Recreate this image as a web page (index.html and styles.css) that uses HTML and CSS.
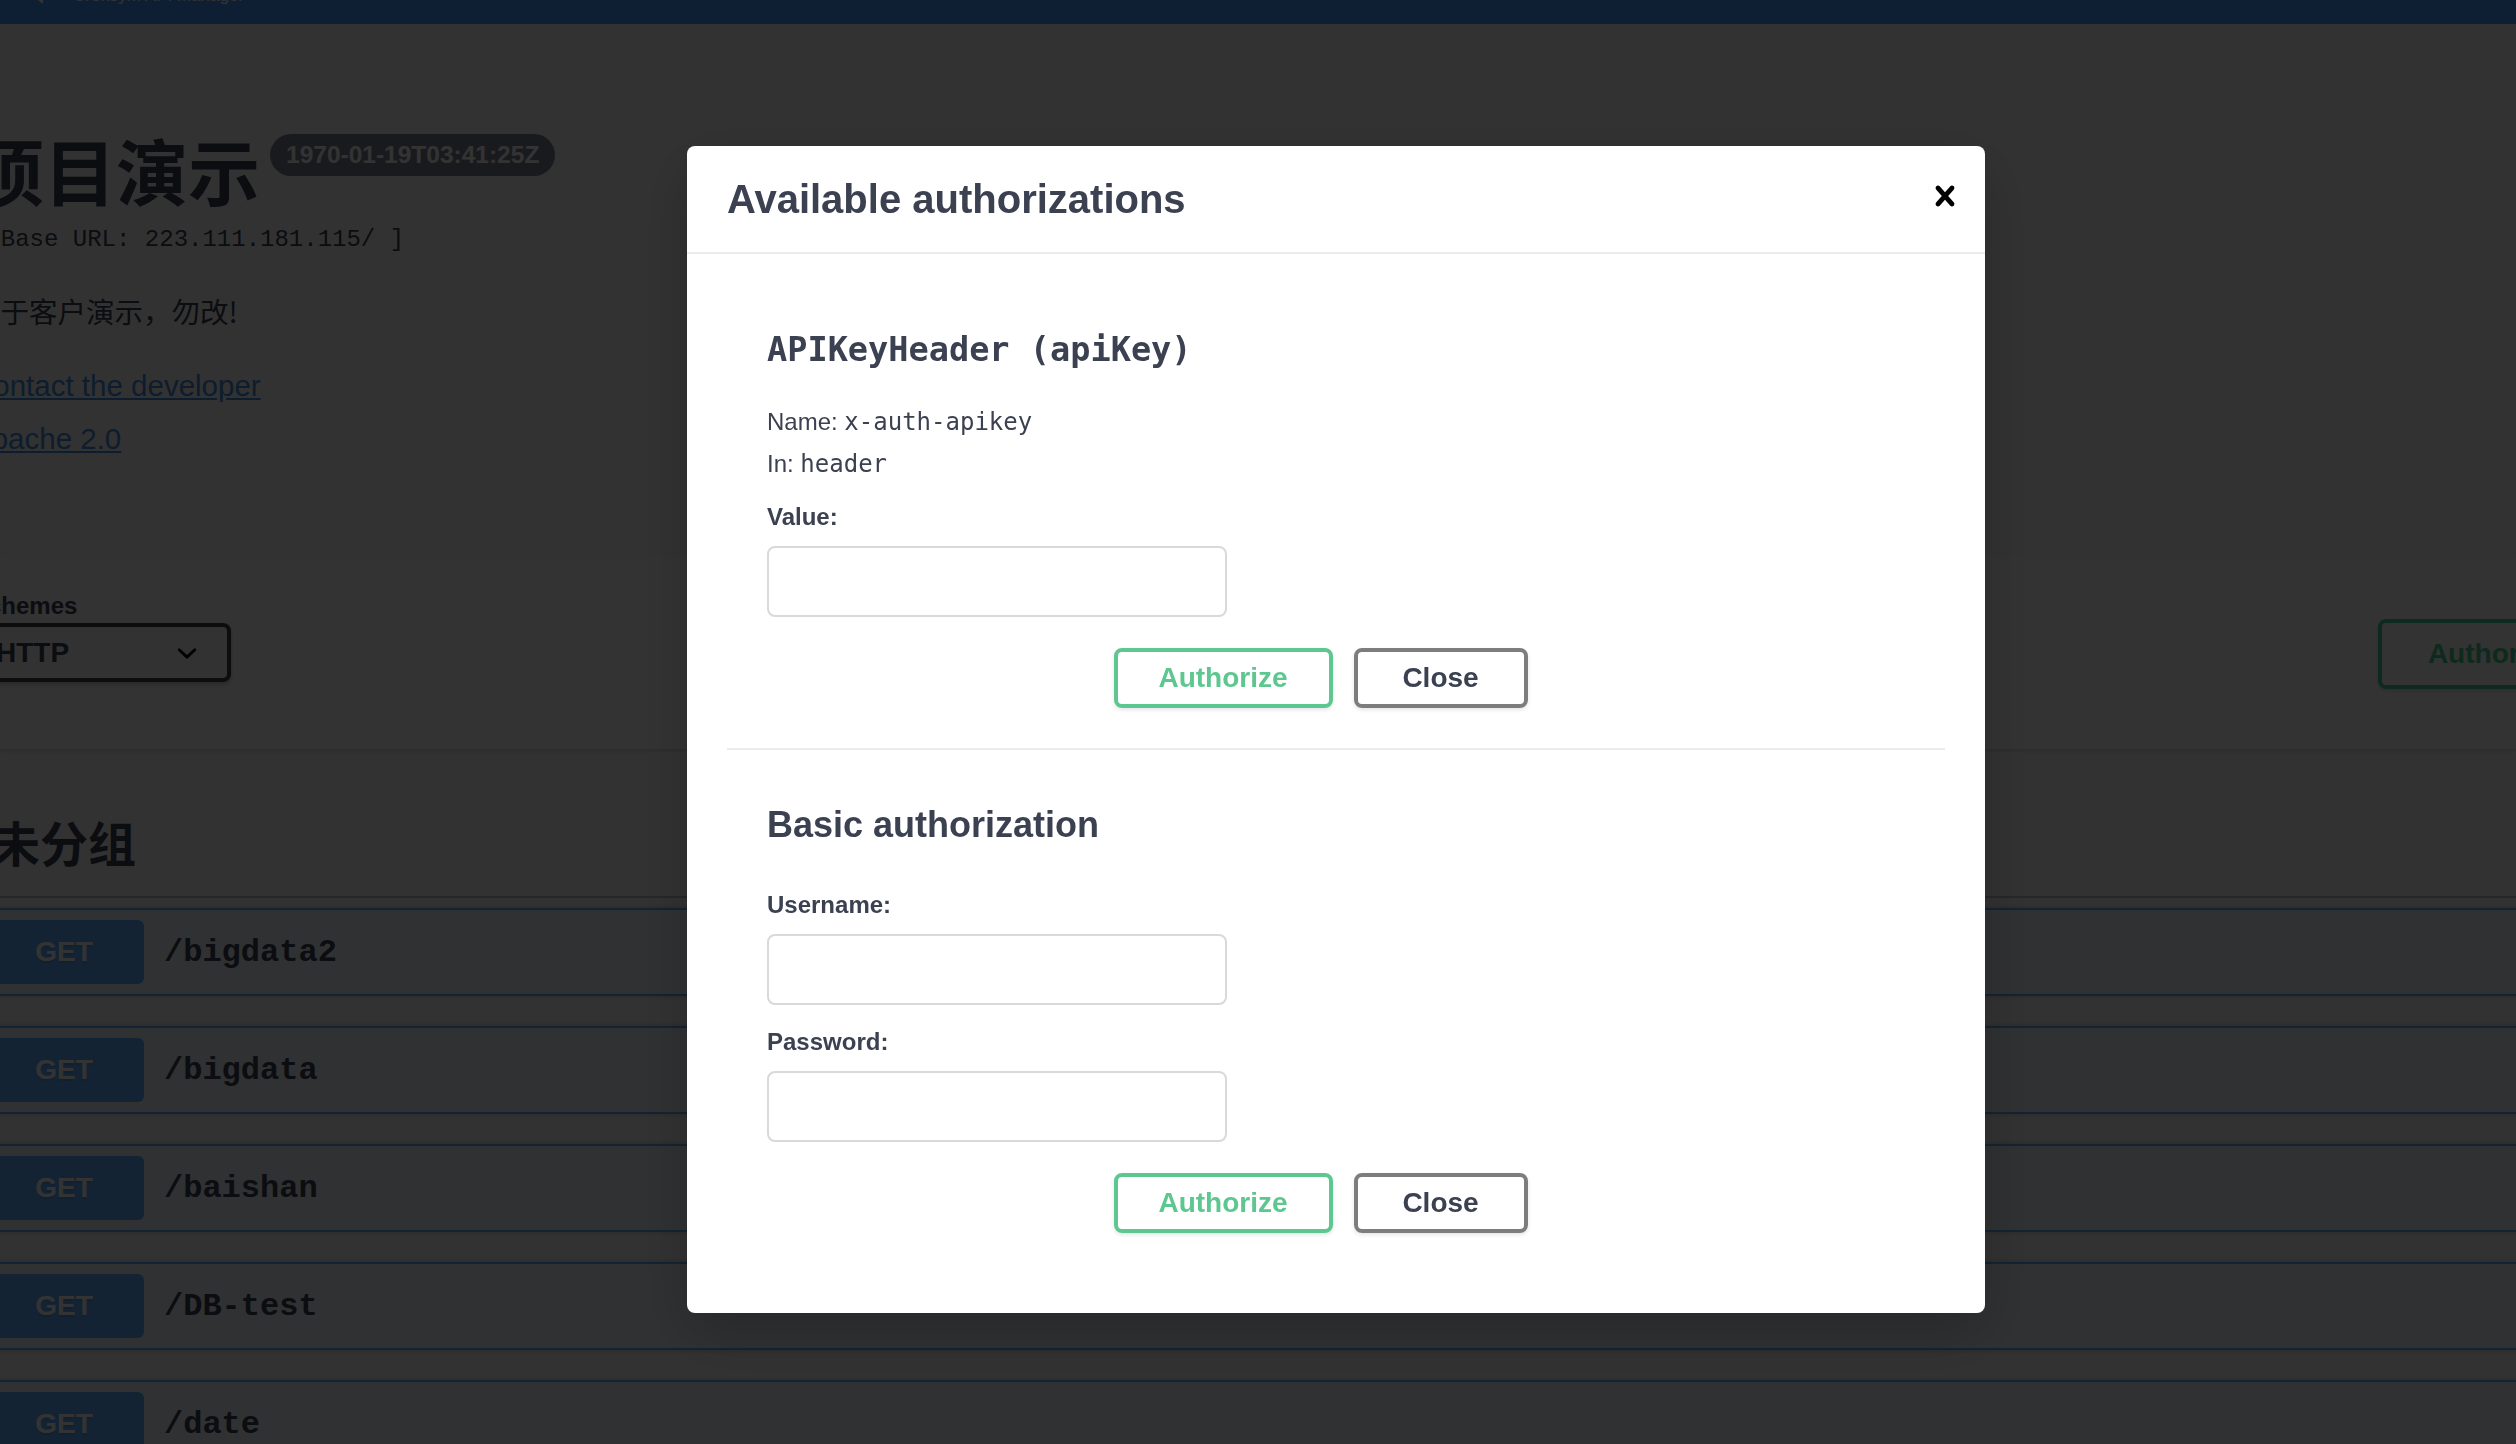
FILE: index.html
```html
<!DOCTYPE html>
<html lang="zh-CN">
<head>
<meta charset="utf-8">
<title>项目演示 - Swagger UI</title>
<link rel="stylesheet" href="styles.css">
</head>
<body>
<div class="page">
  <header class="topbar">
    <div class="topbar-inner">
      <svg class="topbar-arrow" width="10" height="16" viewBox="0 0 10 16"><polygon points="10,0 10,16 0,8" fill="#ffffff"/></svg>
      <span class="topbar-title">Cronsym API Manager</span>
    </div>
  </header>

  <div class="wrapper">
    <section class="info">
      <div class="title-row">
        <h2 class="title">项目演示</h2>
        <span class="version"><pre class="version-text">1970-01-19T03:41:25Z</pre></span>
      </div>
      <pre class="base-url">[ Base URL: 223.111.181.115/ ]</pre>
      <p class="desc">用于客户演示，勿改!</p>
      <div class="contact"><a class="link" href="#">Contact the developer</a></div>
      <div class="license"><a class="link" href="#">Apache 2.0</a></div>
    </section>
  </div>

  <section class="scheme-container">
    <div class="wrapper scheme-row">
      <div class="schemes">
        <span class="schemes-title">Schemes</span>
        <div class="select">
          <span class="select-value">HTTP</span>
          <svg class="select-arrow" width="40" height="40" viewBox="0 0 20 20"><path fill="#000" d="M13.418 7.859a.695.695 0 01.978 0 .68.68 0 010 .969l-3.908 3.830a.697.697 0 01-.979 0l-3.908-3.830a.68.68 0 010-.969.695.695 0 01.978 0L10 11l3.418-3.141z"/></svg>
        </div>
      </div>
      <button class="btn btn-authorize-top"><span class="btn-text">Authorize</span><svg width="40" height="40" viewBox="0 0 20 20"><path fill="#49cc90" d="M15.8 8H14V5.6C14 2.703 12.665 1 10 1 7.334 1 6 2.703 6 5.6V6h2v-.801C8 3.754 8.797 3 10 3c1.203 0 2 .754 2 2.199V8H4c-.553 0-1 .646-1 1.199V17c0 .549.428 1.139.951 1.307l1.197.387C5.672 18.861 6.55 19 7.1 19h5.8c.549 0 1.428-.139 1.951-.307l1.196-.387c.524-.167.953-.757.953-1.306V9.199C17 8.646 16.352 8 15.8 8z"/></svg></button>
    </div>
  </section>

  <div class="wrapper ops">
    <h3 class="opblock-tag">未分组</h3>
    <div class="opblock"><div class="summary"><span class="method">GET</span><span class="path">/bigdata2</span></div></div>
    <div class="opblock"><div class="summary"><span class="method">GET</span><span class="path">/bigdata</span></div></div>
    <div class="opblock"><div class="summary"><span class="method">GET</span><span class="path">/baishan</span></div></div>
    <div class="opblock"><div class="summary"><span class="method">GET</span><span class="path">/DB-test</span></div></div>
    <div class="opblock"><div class="summary"><span class="method">GET</span><span class="path">/date</span></div></div>
  </div>
</div>

<div class="backdrop"></div>

<div class="modal" role="dialog">
  <div class="modal-header">
    <h3 class="modal-title">Available authorizations</h3>
    <button class="close-modal" aria-label="Close">
      <svg width="40" height="40" viewBox="0 0 20 20"><path fill="#000" d="M14.348 14.849c-.469.469-1.229.469-1.697 0L10 11.819l-2.651 3.029c-.469.469-1.229.469-1.697 0-.469-.469-.469-1.229 0-1.697l2.758-3.15-2.759-3.152c-.469-.469-.469-1.228 0-1.697.469-.469 1.228-.469 1.697 0L10 8.183l2.651-3.031c.469-.469 1.228-.469 1.697 0 .469.469.469 1.229 0 1.697l-2.758 3.152 2.758 3.15c.469.469.469 1.229 0 1.698z"/></svg>
    </button>
  </div>
  <div class="modal-content">
    <div class="auth-container">
      <h4 class="auth-title mono">APIKeyHeader (apiKey)</h4>
      <div class="auth-row">Name: <code class="code">x-auth-apikey</code></div>
      <div class="auth-row auth-row-in">In: <code class="code">header</code></div>
      <label class="field-label label-value">Value:</label>
      <input class="field" type="text">
      <div class="btn-wrapper">
        <button class="btn btn-modal btn-authorize">Authorize</button>
        <button class="btn btn-modal btn-close">Close</button>
      </div>
    </div>
    <div class="auth-container last">
      <h4 class="auth-title sans">Basic authorization</h4>
      <label class="field-label label-user">Username:</label>
      <input class="field" type="text">
      <label class="field-label label-pass">Password:</label>
      <input class="field" type="password">
      <div class="btn-wrapper">
        <button class="btn btn-modal btn-authorize">Authorize</button>
        <button class="btn btn-modal btn-close">Close</button>
      </div>
    </div>
  </div>
</div>
</body>
</html>
```

FILE: styles.css
```css
html, body {
  margin: 0;
  padding: 0;
  overflow: hidden;
  width: 100%;
  height: 100%;
}

body {
  background: #fafafa;
  color: #3b4151;
  font-family: "Liberation Sans", "Noto Sans CJK SC", sans-serif;
}

.page {
  width: 100%;
}

/* ---------- top bar ---------- */
.topbar {
  height: 24px;
  background: rgb(75, 155, 255);
  overflow: hidden;
}

.topbar-inner {
  display: flex;
  align-items: center;
  margin-top: -14px;
  padding-left: 33px;
  height: 20px;
}

.topbar-arrow {
  flex: none;
}

.topbar-title {
  margin-left: 30px;
  font-size: 17px;
  line-height: 20px;
  color: #ffffff;
}

/* ---------- wrapper ---------- */
.wrapper {
  width: 2715px;
  margin-left: -28px;
}

/* ---------- info ---------- */
.info {
  padding-top: 109px;
}

.title-row {
  display: flex;
  align-items: flex-start;
}

.title {
  margin: 0;
  font-family: "Noto Sans CJK SC", sans-serif;
  font-size: 72px;
  line-height: 72px;
  font-weight: 700;
  color: #3b4151;
}

.version {
  display: inline-block;
  margin: 1px 0 0 10px;
  padding: 7px 16px 7px 16px;
  background: #7d8492;
  border-radius: 57px;
}

.version-text {
  margin: 0;
  font-family: "Liberation Sans", sans-serif;
  font-size: 24.5px;
  line-height: 28px;
  font-weight: 700;
  color: #ffffff;
}

.base-url {
  margin: 19px 0 0;
  font-family: "Liberation Mono", monospace;
  font-size: 24px;
  line-height: 32px;
  color: #3b4151;
}

.desc {
  margin: 35px 0 0;
  font-family: "Noto Sans CJK SC", sans-serif;
  font-size: 28.5px;
  line-height: 40px;
}

.contact {
  margin-top: 35px;
  font-size: 29.5px;
  line-height: 40px;
}

.license {
  margin-top: 13px;
  font-size: 29.5px;
  line-height: 40px;
}

.link {
  color: #4990e2;
  text-decoration: underline;
}

/* ---------- scheme container ---------- */
.scheme-container {
  margin-top: 99px;
  height: 191px;
  box-sizing: border-box;
  padding-top: 34px;
  background: #ffffff;
  box-shadow: 0 2px 4px 0 rgba(0, 0, 0, 0.15);
}

.scheme-row {
  display: flex;
  align-items: flex-start;
  justify-content: space-between;
}

.schemes {
  display: flex;
  flex-direction: column;
}

.schemes-title {
  font-size: 24px;
  line-height: 28px;
  font-weight: 700;
  color: #3b4151;
}

.select {
  margin-top: 3px;
  width: 259px;
  height: 59px;
  box-sizing: border-box;
  border: 4px solid #41444e;
  border-radius: 8px;
  box-shadow: 0 2px 4px 0 rgba(0, 0, 0, 0.25);
  background: #f7f7f7;
  display: flex;
  align-items: center;
  padding-left: 20px;
}

.select-value {
  font-size: 28px;
  font-weight: 700;
  color: #3b4151;
}

.select-arrow {
  margin-left: auto;
  margin-right: 20px;
}

/* ---------- buttons ---------- */
.btn {
  box-sizing: border-box;
  border: 4px solid #808080;
  border-radius: 8px;
  background: transparent;
  font-family: "Liberation Sans", sans-serif;
  font-size: 28px;
  font-weight: 700;
  line-height: 1;
  box-shadow: 0 2px 4px rgba(0, 0, 0, 0.1);
  display: flex;
  align-items: center;
  justify-content: center;
  padding: 0;
  cursor: pointer;
}

.btn-authorize-top {
  margin-top: 27px;
  height: 70px;
  padding: 0 46px;
  border-color: #49cc90;
  color: #49cc90;
  background: transparent;
}

.btn-text {
  padding-right: 40px;
}

/* ---------- operations ---------- */
.ops {
  margin-top: 38px;
}

.opblock-tag {
  margin: 0 0 10px;
  padding: 20px 40px 20px 20px;
  font-family: "Noto Sans CJK SC", sans-serif;
  font-size: 48px;
  line-height: 69px;
  font-weight: 700;
  color: #3b4151;
  border-bottom: 2px solid rgba(59, 65, 81, 0.3);
}

.opblock {
  margin-bottom: 30px;
  border: 2px solid #61affe;
  border-radius: 8px;
  background: rgba(97, 175, 254, 0.1);
  box-shadow: 0 0 6px rgba(0, 0, 0, 0.19);
}

.summary {
  display: flex;
  align-items: center;
  padding: 10px;
}

.method {
  width: 160px;
  height: 64px;
  display: flex;
  align-items: center;
  justify-content: center;
  background: #61affe;
  border-radius: 6px;
  color: #ffffff;
  font-size: 28px;
  font-weight: 700;
  text-shadow: 0 2px 0 rgba(0, 0, 0, 0.1);
}

.path {
  padding: 0 20px;
  font-family: "Liberation Mono", monospace;
  font-size: 32px;
  font-weight: 700;
  color: #3b4151;
}

/* ---------- overlay ---------- */
.backdrop {
  position: fixed;
  inset: 0;
  background: rgba(0, 0, 0, 0.8);
}

.modal {
  position: fixed;
  left: 687px;
  top: 146px;
  width: 1298px;
  background: #ffffff;
  border-radius: 8px;
  box-shadow: 0 20px 60px 0 rgba(0, 0, 0, 0.2);
}

.modal-header {
  display: flex;
  align-items: center;
  height: 106px;
  border-bottom: 2px solid #ebebeb;
}

.modal-title {
  flex: 1;
  margin: 0;
  padding: 0 40px;
  font-size: 40px;
  line-height: 46px;
  font-weight: 700;
  color: #3b4151;
}

.close-modal {
  border: none;
  background: none;
  padding: 0 20px;
  margin-top: -6px;
  display: flex;
  align-items: center;
  cursor: pointer;
}

.modal-content {
  padding: 40px;
}

.auth-container {
  display: flex;
  flex-direction: column;
  align-items: flex-start;
  padding: 20px 40px 40px;
  margin-bottom: 20px;
  border-bottom: 2px solid #ebebeb;
}

.auth-container.last {
  border-bottom: none;
  margin-bottom: 0;
}

.auth-title {
  margin: 10px 0 30px;
  color: #3b4151;
  font-weight: 700;
}

.auth-title.mono {
  font-family: "DejaVu Sans Mono", monospace;
  font-size: 33.6px;
  line-height: 52px;
}

.auth-title.sans {
  font-size: 36px;
  line-height: 50px;
}

.auth-row {
  font-size: 24px;
  line-height: 32px;
  color: #3b4151;
}

.auth-row-in {
  margin-top: 10px;
}

.code {
  font-family: "DejaVu Sans Mono", monospace;
  font-size: 24px;
  color: #3b4151;
}

.field-label {
  display: block;
  font-size: 24px;
  line-height: 32px;
  font-weight: 700;
  color: #3b4151;
}

.label-value { margin-top: 21px; }
.label-user { margin-top: 9px; }
.label-pass { margin-top: 21px; }

.field {
  display: block;
  margin-top: 13px;
  width: 460px;
  height: 71px;
  box-sizing: border-box;
  border: 2px solid #d9d9d9;
  border-radius: 8px;
  padding: 16px 20px;
  font-size: 26px;
  background: #ffffff;
  outline: none;
}

.btn-wrapper {
  align-self: stretch;
  margin-top: 31px;
  display: flex;
  justify-content: center;
  gap: 21px;
  padding-right: 31px;
}

.btn-modal {
  height: 60px;
}

.btn-authorize {
  width: 219px;
  border-color: #5ec68f;
  color: #5ec68f;
}

.btn-close {
  width: 174px;
  border-color: #7d7d7d;
  color: #3b4151;
}
```
